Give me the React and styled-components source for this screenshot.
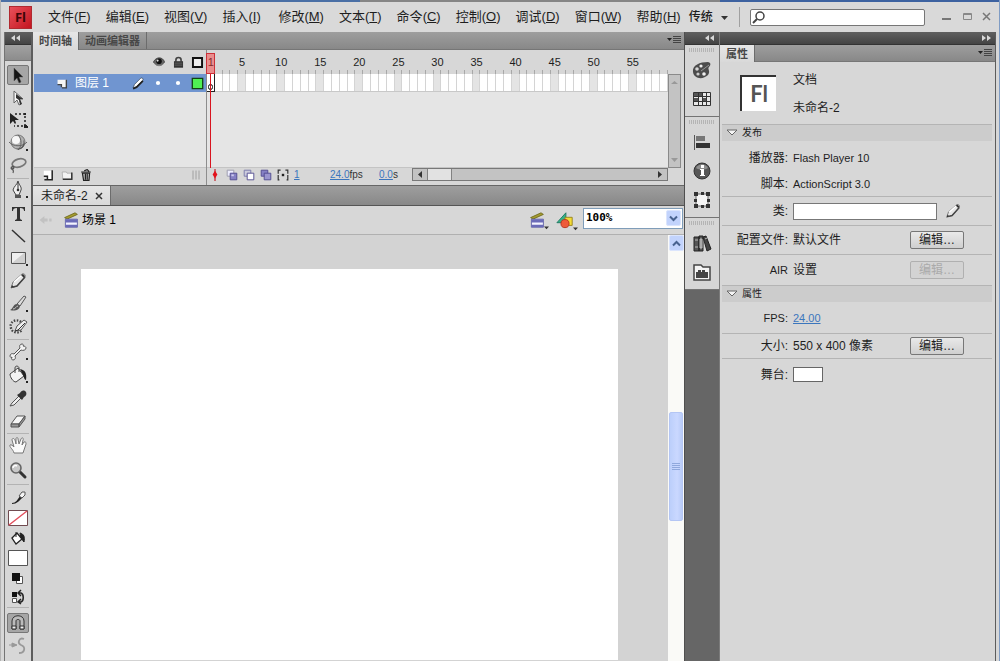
import React from 'react';
import styled, { createGlobalStyle } from 'styled-components';

const GlobalStyle = createGlobalStyle`
    *, *::before, *::after { box-sizing: border-box; }

    body {
        margin: 0;
        background: #d6d6d6;
        color: #1e1e1e;
        font: 12px/16px 'Liberation Sans', 'Noto Sans CJK SC', sans-serif;
        overflow: hidden;
    }

    button, input, select {
        font: inherit;
        color: inherit;
        margin: 0;
    }
`;

const Window = styled.div`
    display: flex;
    flex-direction: column;
    height: 100vh;
    background: #d7d7d7;
    border-left: 1px solid #b4b4b4;
    border-right: 1px solid #7f9cc4;
`;

const TopEdge = styled.div`
    height: 2px;
    flex: none;
    background: linear-gradient(90deg, #4a6fa5 0 36%, #858585 36% 72%, #3d62a0 72%);
`;

/* Menu bar */

const MenuBar = styled.header`
    display: flex;
    align-items: center;
    height: 30px;
    flex: none;
    padding: 0 6px 0 8px;
    background: #d9d9d9;
`;

const Logo = styled.div`
    flex: none;
    width: 23px;
    height: 23px;
    margin-right: 16px;
    border: 1px solid #b02a30;
    background: linear-gradient(135deg, #e8515a, #c4141f);
    color: #3c0508;
    font: bold 13px/20px 'Open Sans', sans-serif;
    text-align: center;
`;

const MenuList = styled.nav`
    display: flex;
    flex: none;
    gap: 15px;
`;

const MenuButton = styled.button`
    display: flex;
    align-items: center;
    min-width: 41px;
    padding: 0;
    border: 0;
    background: none;
    font-size: 13px;
    line-height: 20px;
    white-space: nowrap;
`;

const WorkspaceButton = styled(MenuButton)`
    flex: none;
    gap: 8px;
    margin-left: 8px;
    padding-right: 11px;
    border-right: 1px solid #a0a0a0;
    font-size: 12px;
    font-weight: 500;
`;

const Search = styled.label`
    display: flex;
    align-items: center;
    flex: 1;
    min-width: 0;
    height: 17px;
    margin: 0 16px 0 10px;
    border: 1px solid #767676;
    border-radius: 2px;
    background: #fff;

    input {
        flex: 1;
        min-width: 0;
        height: 14px;
        border: 0;
        outline: 0;
        background: none;
    }
`;

const WindowButtons = styled.div`
    display: flex;
    gap: 8px;

    button {
        display: flex;
        width: 12px;
        height: 14px;
        padding: 0;
        border: 0;
        background: none;
    }
`;

/* Frame of panels */

const Body = styled.div`
    display: grid;
    grid-template-columns: 29px 1fr 36px 276px;
    grid-template-rows: minmax(0, 1fr);
    flex: 1;
    min-height: 0;
    margin: 0 3px;
`;

const DarkBar = styled.div`
    display: flex;
    align-items: center;
    justify-content: ${({ $end }) => ($end ? 'flex-end' : 'flex-start')};
    height: 13px;
    flex: none;
    padding: 0 4px 0 6px;
    border-bottom: 1px solid #333;
    background: linear-gradient(#606060, #444);
`;

const TabStrip = styled.div`
    display: flex;
    align-items: stretch;
    flex: none;
    height: ${({ $height }) => $height}px;
    padding-right: 3px;
    background: linear-gradient(#9e9e9e, #888);
    border-bottom: 1px solid #767676;

    > svg {
        margin: auto 0 auto auto;
    }
`;

const Tab = styled.button`
    height: ${({ $height }) => $height}px;
    padding: 0 6px;
    border: 0;
    border-right: 1px solid #6c6c6c;
    background: ${({ $active }) => ($active ? 'linear-gradient(#e6e6e6, #d9d9d9)' : 'none')};
    color: #484848;
    font-size: ${({ $size }) => $size || 11}px;
    font-weight: 700;
    line-height: 16px;
    white-space: nowrap;
`;

/* Tool bar */

const Toolbar = styled.aside`
    display: flex;
    flex-direction: column;
    border-left: 1px solid #747474;
    border-right: 2px solid #5d5d5d;
    overflow: hidden;
`;

const ToolbarCap = styled.div`
    height: 16px;
    margin-bottom: 3px;
    flex: none;
    border-bottom: 1px solid #777;
    background: linear-gradient(#a2a2a2, #8c8c8c);
`;

const ToolGroup = styled.div`
    display: grid;
    grid-auto-rows: 1fr;
    justify-items: center;
    align-items: center;
    flex: none;
    height: ${({ $height }) => $height}px;
    margin: 0 2px;
    padding-top: ${({ $top }) => $top || 0}px;

    & + & {
        margin-top: 1px;
        border-top: 1px solid #b3b3b3;
    }
`;

const ToolButton = styled.button`
    position: relative;
    display: flex;
    align-items: center;
    justify-content: center;
    width: 22px;
    height: 20px;
    padding: 0;
    border: 1px solid ${({ $on }) => ($on ? '#777' : 'transparent')};
    border-radius: 2px;
    background: ${({ $on }) => ($on ? '#a6a6a6' : 'none')};

    &::after {
        content: '';
        display: ${({ $more }) => ($more ? 'block' : 'none')};
        position: absolute;
        right: 0;
        bottom: 1px;
        width: 2px;
        height: 2px;
        background: #222;
    }
`;

/* Timeline */

const Center = styled.main`
    display: flex;
    flex-direction: column;
    min-width: 0;
    min-height: 0;
`;

const Timeline = styled.section`
    display: grid;
    grid-template-columns: 173px 1fr;
    flex: none;
    padding: 0 3px 0 1px;
`;

const LayerPane = styled.div`
    border-right: 1px solid #8d8d8d;
`;

const LayerHead = styled.div`
    display: flex;
    align-items: center;
    justify-content: flex-end;
    gap: 6px;
    height: 24px;
    padding-right: 2px;
`;

const Layer = styled.div`
    display: flex;
    align-items: center;
    height: 18px;
    padding: 0 2px 0 23px;
    background: #7095d0;
    color: #fff;

    span {
        flex: 1;
        margin-left: 7px;
    }

    svg + svg { margin-left: 6px; }
`;

const PaneFill = styled.div`
    height: 76px;
    background: #e5e5e5;
    border-bottom: 1px solid #c4c4c4;
`;

const PaneFooter = styled.div`
    display: flex;
    align-items: center;
    gap: ${({ $gap }) => $gap}px;
    height: 17px;
    padding: 0 ${({ $right }) => $right}px 4px ${({ $left }) => $left}px;
    color: #333;
    font-size: 10px;
    line-height: 12px;
    white-space: nowrap;

    > svg:last-child { margin-left: auto; }
`;

const FooterValue = styled.span`
    width: ${({ $width }) => $width}px;
`;

const FramePane = styled.div`
    position: relative;
    min-width: 0;
`;

const Ruler = styled.div`
    display: flex;
    height: 24px;
    padding: 4px 13px 0 0;
    font-size: 11px;
    line-height: 16px;

    span {
        display: flex;
        flex: 1 1 0;
        width: 0;
        justify-content: center;
        background: linear-gradient(#a8a8a8, #a8a8a8) right bottom / 1px 4px no-repeat;
    }
`;

const FrameBody = styled.div`
    display: grid;
    grid-template-columns: 1fr 13px;
`;

const Frames = styled.div`
    display: flex;
    height: 18px;
    border-bottom: 1px solid #c8c8c8;
    background: #fff;
`;

const Frame = styled.i`
    flex: 1 1 0;
    border-right: 1px solid #d4d4d4;
    background: ${({ $fifth }) => ($fifth ? '#e4e4e4' : '#fff')};
`;

const Playhead = styled.div`
    position: absolute;
    top: 3px;
    left: 0;
    display: flex;
    flex-direction: column;
    align-items: center;
    width: 7px;
    height: 115px;
    pointer-events: none;
`;

const PlayheadHandle = styled.div`
    flex: none;
    width: 9px;
    height: 21px;
    border: 1px solid #cc3038;
    background: rgba(255, 50, 50, 0.45);
`;

const PlayheadLine = styled.div`
    flex: 1;
    width: 1px;
    background: #d8141f;
`;

const KeyFrame = styled.div`
    position: absolute;
    top: 24px;
    left: 0;
    width: 8px;
    height: 18px;
    border: solid #222;
    border-width: 0 1px 1px 0;

    &::after {
        content: '';
        position: absolute;
        left: 1px;
        bottom: 1px;
        width: 5px;
        height: 6px;
        border: 1px solid #111;
        border-radius: 3px;
    }
`;

const FrameScroll = styled.div`
    display: flex;
    flex-direction: column;
    justify-content: space-between;
    align-items: center;
    padding: 4px 0;
    border: 1px solid #8a8a8a;
    background: #c3c3c3;
`;

const HScroll = styled.div`
    display: flex;
    flex: 1;
    align-items: center;
    justify-content: space-between;
    height: 13px;
    margin-left: 10px;
    padding-right: 4px;
    border: 1px solid #787878;
    background: #c3c3c3;

    i {
        width: 25px;
        height: 11px;
        margin: 0 auto 0 0;
        border: solid #828282;
        border-width: 0 1px;
        background: #e2e2e2;
    }

    svg:first-child { margin: 0 3px 0 4px; }
`;

const HotText = styled.a`
    color: #3b76bd;
    text-decoration: underline;
`;

/* Document */

const DocumentTabs = styled(TabStrip)`
    border-top: 1px solid #666;
    border-bottom-color: #555;
`;

const DocumentTab = styled(Tab)`
    display: flex;
    align-items: center;
    gap: 7px;
    padding: 0 7px 0 8px;
    font-weight: 400;
    color: #222;
`;

const EditBar = styled.div`
    display: flex;
    align-items: center;
    flex: none;
    height: 29px;
    padding: 0 1px 0 5px;
    border-bottom: 1px solid #b0b0b0;
`;

const EditIcon = styled.span`
    display: flex;
    margin-left: 9px;
`;

const EditButton = styled.button`
    display: flex;
    align-items: flex-end;
    width: 27px;
    padding: 0;
    border: 0;
    background: none;

    svg + svg {
        margin: 0 0 -2px -1px;
    }
`;

const SceneName = styled.span`
    flex: 1;
    margin-left: 3px;
    color: #000;
`;

const Zoom = styled.label`
    position: relative;
    align-self: flex-start;
    width: 100px;
    margin-top: 2px;

    select {
        display: block;
        width: 100%;
        height: 21px;
        padding: 0 2px 2px;
        border: 1px solid #7f9db9;
        border-radius: 0;
        outline: 0;
        background: #fff;
        color: #000;
        font: bold 11px/16px 'DejaVu Sans Mono', monospace;
        appearance: none;
    }
`;

const ScrollButton = styled.span`
    display: flex;
    align-items: center;
    justify-content: center;
    width: 15px;
    height: 16px;
    border: 1px solid #dbe5fd;
    border-radius: 2px;
    background: #c2d3fc;
`;

const ZoomArrow = styled(ScrollButton)`
    position: absolute;
    top: 2px;
    right: 2px;
    pointer-events: none;
`;

const Work = styled.div`
    display: flex;
    flex: 1;
    min-height: 0;
    background: #d3d3d3;
`;

const Stage = styled.div`
    flex: 1;
    margin: 34px 50px 1px 48px;
    background: #fff;
`;

const VScroll = styled.div`
    display: grid;
    grid-template-rows: 17px 160fr 109fr 140fr;
    justify-items: center;
    width: 16px;
    background: #fafaf7;
`;

const VThumb = styled.div`
    display: flex;
    align-items: center;
    justify-content: center;
    grid-row: 3;
    width: 14px;
    border: 1px solid #b4c6f4;
    border-radius: 2px;
    background: linear-gradient(90deg, #bccffb, #cad8ff 60%, #b9cbf8);
`;

/* Icon dock */

const Dock = styled.aside`
    display: flex;
    flex-direction: column;
    border-left: 1px solid #4f4f4f;
    border-right: 1px solid #7b7b7b;
    background: #666;
`;

const DockGroup = styled.div`
    display: flex;
    flex-direction: column;
    align-items: center;
    gap: 7px;
    padding: 3px 0 6px;
    border-bottom: 1px solid #747474;
    background: #d6d6d6;

    &::before {
        content: '';
        width: 26px;
        height: 4px;
        background: repeating-linear-gradient(90deg, #b4b4b4 0 1px, transparent 1px 2px);
    }
`;

const DockButton = styled.button`
    display: flex;
    align-items: center;
    justify-content: center;
    width: 22px;
    height: 22px;
    padding: 0;
    border: 0;
    background: none;
`;

/* Properties panel */

const Properties = styled.aside`
    display: flex;
    flex-direction: column;
    min-width: 0;
    border-right: 1px solid #5c5c5c;
`;

const DocInfo = styled.div`
    display: grid;
    grid-template-columns: 36px 1fr;
    column-gap: 17px;
    height: 62px;
    padding: 13px 20px 0;
`;

const DocBadge = styled.div`
    width: 36px;
    height: 36px;
    border: solid #333;
    border-width: 2px 0 0 2px;
    background: #fff;
    color: #555;
    font: bold 22px/34px Lato, sans-serif;
    text-align: center;
`;

const DocTitle = styled.div`
    display: grid;
    row-gap: 12px;
    align-content: start;
    margin-top: -3px;
`;

const SectionHead = styled.button`
    display: flex;
    align-items: center;
    gap: 4px;
    height: 17px;
    margin: 0 3px 0 2px;
    padding: 0 4px;
    border: 0;
    border-top: 1px solid #b4b4b4;
    background: #ccc;
    font-size: 10px;
    line-height: 14px;
`;

const PublishRows = styled.div`
    padding-top: 4px;
`;

const Row = styled.div`
    display: flex;
    align-items: center;
    height: ${({ $height }) => $height}px;
    margin: 0 3px 0 2px;
    padding-right: 28px;
    border-bottom: ${({ $line }) => ($line ? 1 : 0)}px solid #b4b4b4;
    font-size: ${({ $latin }) => ($latin ? 11 : 12)}px;
    white-space: nowrap;
`;

const RowLabel = styled.label`
    width: 66px;
    margin-right: 5px;
    text-align: right;
    font-size: ${({ $latin }) => ($latin ? 11 : 12)}px;
`;

const Value = styled.span`
    flex: 1;
`;

const ClassInput = styled.input`
    flex: 1;
    min-width: 0;
    height: 17px;
    margin-right: 7px;
    border: 1px solid #777;
    outline: 0;
    background: #fff;
`;

const PickButton = styled.button`
    display: flex;
    padding: 0 2px 0 0;
    border: 0;
    background: none;
`;

const PushButton = styled.button`
    width: 54px;
    height: 18px;
    padding: 0;
    border: 1px solid #777;
    border-radius: 2px;
    background: linear-gradient(#e9e9e9, #cfcfcf);
    line-height: 14px;

    &:disabled {
        border-color: #b0b0b0;
        background: #d3d3d3;
        color: #aaa;
    }
`;

const ColorSwatch = styled.button`
    width: 30px;
    height: 15px;
    padding: 0;
    border: 1px solid #666;
    background: #fff;
`;

const shapes = {
    arrow: <path d="M6 3v13l3-3 2 5 2-1-2-5h4z" fill="#161616" stroke="#555" strokeWidth=".5" />,
    subselect: (
        <>
            <path d="M6 3v12l3-3 2 5 2-1-2-5h4z" fill="#fafafa" stroke="#666" />
            <path d="M8 6v4l3 2 1 5 2-1-2-5h3z" fill="#333" />
        </>
    ),
    transform: (
        <>
            <path d="M7 4h10v12H6" fill="none" stroke="#222" strokeWidth="1.5" strokeDasharray="2 2" />
            <path d="M2 3v11l3-3 2 3 1-1-1-3h4z" fill="#222" />
            <path d="M16 15h3v3h-3zM16 3h2v2h-2z" fill="#222" />
        </>
    ),
    sphere: (
        <>
            <circle cx="10" cy="9" r="7" fill="#b2b2b2" stroke="#777" />
            <circle cx="8" cy="7" r="4" fill="#f7f7f7" />
            <path d="M1 9c4 5 14 5 18 0M10 2c4 3 4 12 0 15" fill="none" stroke="#666" />
            <path d="M15 6c2 5-1 10-7 10 6 2 11-4 7-10z" fill="#555" />
        </>
    ),
    lasso: (
        <>
            <ellipse cx="11" cy="7" rx="7" ry="4" transform="rotate(-15 11 7)" fill="none" stroke="#777" strokeWidth="1.7" />
            <path d="M5 10c-3 1-2 4 0 3s0-4-1-2c-1 2 3 3 1 6" fill="none" stroke="#555" strokeWidth="1.3" />
        </>
    ),
    pen: (
        <>
            <path d="M10 1c1 4 4 6 3 9l-2 5H8L5 10c1-4 4-5 5-9z" fill="#f1f1f1" stroke="#444" />
            <path d="M10 2v8" stroke="#333" />
            <circle cx="10" cy="10" r="1.3" fill="#333" />
            <path d="M7 15h6v3H7z" fill="#555" />
        </>
    ),
    type: <path d="M4 4h13v4h-1c0-2-1-3-4-3v10c0 1 1 2 2 2v1H7v-1c1 0 2-1 2-2V5C6 5 5 6 5 8H4z" fill="#333" />,
    line: <path d="M4 4l13 12" stroke="#333" strokeWidth="1.5" />,
    rect: (
        <>
            <path d="M3.5 4.5h14v11h-14z" fill="#d0d0d0" stroke="#555" />
            <path d="M4 5h12L4 15z" fill="#f0f0f0" />
        </>
    ),
    pencil: (
        <>
            <path d="M3 17l2-6L14 3c2-1 4 1 3 3l-8 9z" fill="#e6e6e6" stroke="#777" />
            <path d="M6 11l8-7" stroke="#fff" strokeWidth="1.5" />
            <path d="M3 17l1-3 2 2zM13 4l3 3 1-2-2-2z" fill="#333" />
            <path d="M5 16l4-1 8-9" stroke="#444" strokeWidth="1.6" fill="none" />
        </>
    ),
    brush: (
        <>
            <path d="M9 10L16 2l2 1-6 9z" fill="#ddd" stroke="#555" />
            <path d="M2 16c3-1 3-6 7-6l3 2c-1 5-6 5-10 4z" fill="#555" />
            <path d="M5 15c3 0 3-3 5-3" stroke="#ccc" fill="none" />
        </>
    ),
    deco: (
        <>
            <path d="M13 5C8 1 1 5 3 11c1 5 8 6 11 2" fill="none" stroke="#444" strokeWidth="2.4" strokeDasharray="1.5 1.5" />
            <path d="M7 14l2-5 7-6 3 2-6 8z" fill="#eee" stroke="#555" />
            <path d="M7 14l3-1 7-7" stroke="#333" fill="none" />
        </>
    ),
    bone: (
        <path
            d="M2 14c0-2 2-3 4-2l6-6c-1-2 0-4 2-4 1 0 2 1 1 2 2 0 3 1 3 2 0 2-3 3-5 2l-6 6c1 2 0 4-2 4-1 0-2-1-1-3-1 1-2 0-2-1z"
            fill="#f2f2f2"
            stroke="#555"
        />
    ),
    bucket: (
        <>
            <path d="M2 9l8-6 6 8-8 6c-3 0-6-5-6-8z" fill="#f4f4f4" stroke="#444" />
            <path d="M7 8V3c0-3 4-2 4 0v4" fill="none" stroke="#444" />
            <path d="M12 4c5 1 7 4 6 11-2 0-2-4-3-5z" fill="#222" />
        </>
    ),
    dropper: (
        <>
            <path d="M2 18l2-3 7-7 2 2-7 7z" fill="#eee" stroke="#555" />
            <path d="M9 7l5 5 2-3c3-1 3-5 1-6s-4 0-5 2z" fill="#333" />
        </>
    ),
    eraser: (
        <>
            <path d="M3 13l6-8h8l-6 8z" fill="#f6f6f6" stroke="#555" />
            <path d="M3 13h8v3H3zM11 13l6-8v3l-6 8z" fill="#999" stroke="#555" />
        </>
    ),
    hand: (
        <path
            d="M6 17c-1-4-5-6-4-8 1-1 3 1 4 2L4 4c0-2 2-2 3 0l1 4V3c0-2 2-2 2 0l1 5 2-5c1-2 3-1 2 1l-1 5 2-3c2-1 2 1 2 2l-3 9z"
            fill="#fafafa"
            stroke="#777"
        />
    ),
    magnifier: (
        <>
            <path d="M11 10l6 6" stroke="#333" strokeWidth="3" strokeLinecap="round" />
            <circle cx="8" cy="7" r="5" fill="#c8c8c8" stroke="#666" strokeWidth="1.6" />
            <path d="M5 7c0-2 2-3 4-2" stroke="#fff" fill="none" strokeWidth="1.5" />
        </>
    ),
    strokePen: (
        <>
            <path d="M4 15c4 0 5-3 9-8l2 2c-4 4-6 7-11 7z" fill="#222" />
            <path d="M11 8l3-4h3v3l-3 3z" fill="#f5f5f5" stroke="#555" />
        </>
    ),
    noColor: (
        <>
            <path d="M.5 2.5h19v15H.5z" fill="#fff" stroke="#704b50" />
            <path d="M1 17L19 3" stroke="#e24e5c" strokeWidth="1.4" />
        </>
    ),
    white: <path d="M.5 2.5h19v15H.5z" fill="#fff" stroke="#555" />,
    smallBucket: (
        <>
            <path d="M4 10l5-5 5 6-6 5z" fill="#fff" stroke="#222" strokeWidth="1.3" />
            <path d="M8 9V4M12 5c4 1 5 4 4 9l-3-4z" fill="#222" stroke="#222" />
        </>
    ),
    blackWhite: (
        <>
            <path d="M8.5 8.5h6v7h-6z" fill="#fff" stroke="#555" />
            <path d="M4 5h8v8H4z" fill="#111" />
        </>
    ),
    swap: (
        <>
            <path d="M4 4h5v5H4z" fill="#111" />
            <path d="M4.5 10.5h4v4h-4z" fill="#fff" stroke="#555" />
            <path d="M11 5h2c3 1 3 8 0 9h-2M13 2l-3 3 3 3M13 11l-3 3 3 2" fill="none" stroke="#222" strokeWidth="1.5" />
        </>
    ),
    magnet: (
        <>
            <path d="M4 16V8c0-7 12-7 12 0v8h-4V8c0-2-4-2-4 0v8z" fill="#bbb" stroke="#333" />
            <path d="M4 13h4v3H4zM12 13h4v3h-4z" fill="#eee" stroke="#333" />
        </>
    ),
    smooth: (
        <>
            <path d="M16 3c-5-2-7 4-3 6 5 2 4 8-2 8" fill="none" stroke="#999" strokeWidth="1.8" />
            <path d="M1 9h7M4 7v4l5-2z" fill="#999" stroke="#999" />
        </>
    ),
    eye: (
        <>
            <path d="M2 10c4-8 13-8 16 0-4 7-12 7-16 0z" fill="#666" stroke="#333" />
            <circle cx="10" cy="9" r="4" fill="#111" />
            <path d="M3 12c4 4 10 4 14 0" stroke="#999" fill="none" />
            <circle cx="8" cy="8" r="1.5" fill="#ddd" />
        </>
    ),
    lock: (
        <>
            <path d="M6 9V6c0-5 8-5 8 0v3" fill="none" stroke="#444" strokeWidth="2.5" />
            <path d="M3 8h14v10H3z" fill="#333" />
            <path d="M4 11h12M4 14h12" stroke="#777" />
        </>
    ),
    outline: <path d="M3 3h14v14H3z" fill="#eee" stroke="#111" strokeWidth="3" />,
    layerColor: <path d="M2 2h16v16H2z" fill="#4ff053" stroke="#124212" strokeWidth="2" />,
    layerPage: (
        <>
            <path d="M1 3h16v14h-8v-6H1z" fill="#f5f5f5" />
            <path d="M17 3v15H9M1 12h7v5" fill="none" stroke="#444" strokeWidth="2.5" />
        </>
    ),
    layerPencil: (
        <>
            <path d="M3 17l2-5L14 3c2-1 4 1 3 3l-9 9z" fill="#fff" stroke="#345" />
            <path d="M3 18l5-2 9-9" stroke="#222" strokeWidth="2.5" fill="none" />
        </>
    ),
    dot: <circle cx="10" cy="10" r="3" fill="#fff" />,
    newLayer: (
        <>
            <path d="M3 3h15v14H8v-5H3z" fill="#fff" />
            <path d="M17 2v16H4M3 12h6v5" fill="none" stroke="#222" strokeWidth="2.5" />
        </>
    ),
    folder: (
        <>
            <path d="M2 5h7l1 2h8v10H3z" fill="#f3f3f3" stroke="#999" />
            <path d="M3 17h15V6" fill="none" stroke="#333" strokeWidth="2.5" />
        </>
    ),
    trash: (
        <>
            <path d="M4 7h12l-1 12H6z" fill="#bbb" stroke="#222" strokeWidth="2" />
            <path d="M2 5h16M7 3l5-2 3 3M9 8v10M12 8v10" stroke="#222" strokeWidth="2" fill="none" />
        </>
    ),
    resizer: <path d="M2 1v18M8 1v18M14 1v18" stroke="#a0a0a0" strokeWidth="2" />,
    centerFrame: (
        <>
            <path d="M10 0v20" stroke="#c01018" strokeWidth="1.8" />
            <path d="M10 3l4 6-4 7-4-7z" fill="#e3131d" />
        </>
    ),
    onion: (
        <>
            <path d="M2 2h11v10H2z" fill="#eef" stroke="#99a" strokeWidth="1.5" />
            <path d="M7 7h11v11H7z" fill="#8580c4" stroke="#4f4a8e" strokeWidth="1.5" />
            <path d="M9 9h4v3H9z" fill="#ccc9ee" />
        </>
    ),
    onionOutline: (
        <>
            <path d="M2 2h11v10H2z" fill="#ccd" stroke="#77a" strokeWidth="1.5" />
            <path d="M7 7h11v11H7z" fill="#fff" stroke="#4f4a8e" strokeWidth="1.5" />
        </>
    ),
    onionMulti: (
        <>
            <path d="M2 2h11v10H2z" fill="#8580c4" stroke="#4f4a8e" strokeWidth="1.5" />
            <path d="M7 7h11v11H7z" fill="#9a95cf" stroke="#4f4a8e" strokeWidth="1.5" />
        </>
    ),
    markers: (
        <>
            <path d="M6 2H2v16h4M14 2h4v16h-4" fill="none" stroke="#333" strokeWidth="2" strokeDasharray="10 2" />
            <path d="M8 8h4v4H8z" fill="#222" />
        </>
    ),
    back: <path d="M2 10l6-5v3h4v4H8v3zM14 8h3v4h-3z" fill="#c2c2c2" />,
    scene: (
        <>
            <path d="M2 7L15 1l3 2L5 9z" fill="#a49b30" stroke="#6a6418" />
            <path d="M3 9h15v10H3z" fill="#f3f3ff" stroke="#4e4f9a" />
            <path d="M3 9h15v4H3zM3 16h15v3H3z" fill="#6b6bb8" />
        </>
    ),
    symbols: (
        <>
            <path d="M1 13L11 2v11z" fill="#35b189" stroke="#1e7760" />
            <path d="M10 7h8v9h-8z" fill="#f4dc36" stroke="#93801c" />
            <circle cx="10" cy="14" r="4.5" fill="#ee5b3a" stroke="#b5311c" />
        </>
    ),
    palette: (
        <>
            <path d="M1 12C0 5 8 2 16 2c4 1 2 4 1 5-2 2 2 4-1 8-5 5-14 4-15-3z" fill="#4c4c4c" />
            <circle cx="5" cy="9" r="1.8" fill="#d6d6d6" />
            <circle cx="9" cy="6" r="1.6" fill="#eee" />
            <circle cx="6" cy="14" r="1.6" fill="#ccc" />
            <circle cx="12" cy="14" r="1.8" fill="#eee" />
            <path d="M9 11l8-6" stroke="#999" />
        </>
    ),
    swatches: (
        <>
            <path d="M1.5 3.5h17v13h-17z" fill="#e8e8e8" stroke="#333" />
            <path d="M2 4h8v4H2zM2 9h4v4H2zM10 9h4v4h-4z" fill="#555" />
            <path d="M2 7.5h16M2 12.5h16M6.5 4v13M10.5 4v13M14.5 4v13" stroke="#333" />
        </>
    ),
    align: (
        <>
            <path d="M2.5 3v15" stroke="#555" />
            <path d="M4 4h9v5H4z" fill="#777" />
            <path d="M4 11h14v5H4z" fill="#333" />
        </>
    ),
    info: (
        <>
            <circle cx="10" cy="10" r="8" fill="#565656" stroke="#333" />
            <path d="M4 7c3-5 9-5 12 0-3 2-9 2-12 0z" fill="#8e8e8e" />
            <path d="M9 4h3v3H9zM8 8h4v6h1v1H8v-1h1V9H8z" fill="#fff" />
        </>
    ),
    bounds: (
        <>
            <path d="M4 4h12v12H4z" fill="#f5f5f5" stroke="#666" />
            <path d="M2 2h4v4H2zM14 2h4v4h-4zM2 14h4v4H2zM14 14h4v4h-4zM9 2h3v3H9zM9 15h3v3H9zM2 9h3v3H2zM15 9h3v3h-3z" fill="#333" />
        </>
    ),
    books: (
        <>
            <path d="M2 4h5v14H2zM7 3h4v15H7z" fill="#555" stroke="#222" />
            <path d="M11 4l3-1 5 13-4 2z" fill="#444" stroke="#222" />
            <path d="M3 7h3M3 14h3M8 6h2v9H8zM13 6l2-1" stroke="#bbb" fill="#999" />
        </>
    ),
    components: (
        <>
            <path d="M2 3h7l2 2h7v13H2z" fill="#f4f4f4" stroke="#444" strokeWidth="1.5" />
            <path d="M4 10h2V8h3v2h1V8h3v2h3v6H4z" fill="#444" />
        </>
    ),
};

const Icon = ({ name, size = 20 }) => (
    <svg width={size} height={size} viewBox="0 0 20 20" aria-hidden="true">
        {shapes[name]}
    </svg>
);

const Collapse = ({ flip }) => (
    <svg width="10" height="7" viewBox="0 0 10 7" aria-hidden="true">
        <path d={flip ? 'M1 0l4 3-4 3zM6 0l4 3-4 3z' : 'M4 0L0 3l4 3zM9 0L5 3l4 3z'} fill="#d8d8d8" />
    </svg>
);

const PanelMenu = () => (
    <svg width="14" height="9" viewBox="0 0 14 9" aria-hidden="true">
        <path d="M0 2h5L2.5 5z" fill="#222" />
        <path d="M6 .5h8M6 2.5h8M6 4.5h8M6 6.5h8" stroke="#444" />
    </svg>
);

const Triangle = ({ dir, color = '#333', size = 7 }) => {
    const points = { left: '5,0 5,7 1,3.5', right: '2,0 2,7 6,3.5', up: '0,5 7,5 3.5,2', down: '0,2 7,2 3.5,6' };
    return (
        <svg width={size} height={size} viewBox="0 0 7 7" aria-hidden="true">
            <polygon points={points[dir]} fill={color} />
        </svg>
    );
};

const Chevron = ({ up }) => (
    <svg width="9" height="7" viewBox="0 0 9 7" aria-hidden="true">
        <path d={up ? 'M1 5.5l3.5-3.5L8 5.5' : 'M1 1.5L4.5 5 8 1.5'} fill="none" stroke="#48628f" strokeWidth="2" />
    </svg>
);

const Disclosure = () => (
    <svg width="12" height="8" viewBox="0 0 12 8" aria-hidden="true">
        <path d="M1 1h10L6 6z" fill="#f5f5f5" stroke="#666" />
    </svg>
);

const menus = [
    ['文件', 'F'],
    ['编辑', 'E'],
    ['视图', 'V'],
    ['插入', 'I'],
    ['修改', 'M'],
    ['文本', 'T'],
    ['命令', 'C'],
    ['控制', 'O'],
    ['调试', 'D'],
    ['窗口', 'W'],
    ['帮助', 'H'],
];

const toolGroups = [
    {
        height: 113,
        tools: [{ icon: 'arrow', on: true }, { icon: 'subselect' }, { icon: 'transform', more: true }, { icon: 'sphere', more: true }, { icon: 'lasso' }],
    },
    {
        height: 160,
        tools: [
            { icon: 'pen', more: true },
            { icon: 'type' },
            { icon: 'line' },
            { icon: 'rect', more: true },
            { icon: 'pencil' },
            { icon: 'brush', more: true },
            { icon: 'deco' },
        ],
    },
    {
        height: 93,
        tools: [{ icon: 'bone', more: true }, { icon: 'bucket', more: true }, { icon: 'dropper' }, { icon: 'eraser' }],
    },
    { height: 50, tools: [{ icon: 'hand' }, { icon: 'magnifier' }] },
    {
        height: 122,
        top: 3,
        tools: [
            { icon: 'strokePen' },
            { icon: 'noColor' },
            { icon: 'smallBucket' },
            { icon: 'white' },
            { icon: 'blackWhite' },
            { icon: 'swap' },
        ],
    },
    { height: 50, top: 4, tools: [{ icon: 'magnet', on: true }, { icon: 'smooth' }] },
];

const dockGroups = [
    ['palette', 'swatches'],
    ['align', 'info', 'bounds'],
    ['books', 'components'],
];

const frames = Array.from({ length: 59 }, (_, i) => i + 1);

const Tools = () => (
    <Toolbar>
        <DarkBar>
            <Collapse />
        </DarkBar>
        <ToolbarCap />
        {toolGroups.map((group) => (
            <ToolGroup key={group.tools[0].icon} $height={group.height} $top={group.top}>
                {group.tools.map(({ icon, on, more }) => (
                    <ToolButton key={icon} $on={on} $more={more} aria-label={icon}>
                        <Icon name={icon} />
                    </ToolButton>
                ))}
            </ToolGroup>
        ))}
    </Toolbar>
);

const TimelinePanel = () => (
    <>
        <TabStrip $height={18}>
            <Tab $active $height={18}>时间轴</Tab>
            <Tab $height={17}>动画编辑器</Tab>
            <PanelMenu />
        </TabStrip>
        <Timeline>
            <LayerPane>
                <LayerHead>
                    <Icon name="eye" size={14} />
                    <Icon name="lock" size={13} />
                    <Icon name="outline" size={13} />
                </LayerHead>
                <Layer>
                    <Icon name="layerPage" size={11} />
                    <span>图层 1</span>
                    <Icon name="layerPencil" size={14} />
                    <Icon name="dot" size={14} />
                    <Icon name="dot" size={14} />
                    <Icon name="layerColor" size={13} />
                </Layer>
                <PaneFill />
                <PaneFooter $gap={7} $left={8} $right={4}>
                    <Icon name="newLayer" size={12} />
                    <Icon name="folder" size={12} />
                    <Icon name="trash" size={12} />
                    <Icon name="resizer" size={10} />
                </PaneFooter>
            </LayerPane>
            <FramePane>
                <Ruler>
                    {frames.map((n) => (
                        <span key={n}>{n === 1 || n % 5 === 0 ? n : ''}</span>
                    ))}
                </Ruler>
                <FrameBody>
                    <div>
                        <Frames>
                            {frames.map((n) => (
                                <Frame key={n} $fifth={n % 5 === 0} />
                            ))}
                        </Frames>
                        <PaneFill />
                    </div>
                    <FrameScroll>
                        <Triangle dir="up" color="#999" />
                        <Triangle dir="down" color="#999" />
                    </FrameScroll>
                </FrameBody>
                <PaneFooter $gap={5} $left={2} $right={13}>
                    <Icon name="centerFrame" size={12} />
                    <Icon name="onion" size={12} />
                    <Icon name="onionOutline" size={12} />
                    <Icon name="onionMulti" size={12} />
                    <Icon name="markers" size={12} />
                    <FooterValue $width={31}><HotText href="#frame">1</HotText></FooterValue>
                    <FooterValue $width={44}><HotText href="#fps">24.0</HotText>fps</FooterValue>
                    <FooterValue $width={18}><HotText href="#time">0.0</HotText>s</FooterValue>
                    <HScroll>
                        <Triangle dir="left" />
                        <i />
                        <Triangle dir="right" />
                    </HScroll>
                </PaneFooter>
                <KeyFrame />
                <Playhead>
                    <PlayheadHandle />
                    <PlayheadLine />
                </Playhead>
            </FramePane>
        </Timeline>
    </>
);

const DocumentView = () => (
    <>
        <DocumentTabs $height={21}>
            <DocumentTab $active $height={19} $size={12}>
                未命名-2
                <svg width="8" height="8" viewBox="0 0 8 8" aria-hidden="true">
                    <path d="M1 1l6 6M7 1L1 7" stroke="#333" strokeWidth="1.5" />
                </svg>
            </DocumentTab>
        </DocumentTabs>
        <EditBar>
            <Icon name="back" size={16} />
            <EditIcon>
                <Icon name="scene" size={16} />
            </EditIcon>
            <SceneName>场景 1</SceneName>
            <EditButton aria-label="编辑场景">
                <Icon name="scene" size={16} />
                <Triangle dir="down" size={5} />
            </EditButton>
            <EditButton aria-label="编辑元件">
                <Icon name="symbols" size={18} />
                <Triangle dir="down" size={5} />
            </EditButton>
            <Zoom aria-label="缩放">
                <select defaultValue="100%">
                    <option>100%</option>
                    <option>200%</option>
                </select>
                <ZoomArrow><Chevron /></ZoomArrow>
            </Zoom>
        </EditBar>
        <Work>
            <Stage />
            <VScroll>
                <ScrollButton><Chevron up /></ScrollButton>
                <VThumb>
                    <svg width="8" height="8" viewBox="0 0 8 8" aria-hidden="true">
                        <path d="M0 .5h8M0 2.5h8M0 4.5h8M0 6.5h8" stroke="#8fa8dd" />
                    </svg>
                </VThumb>
            </VScroll>
        </Work>
    </>
);

const PropertiesPanel = () => (
    <Properties>
        <DarkBar $end>
            <Collapse flip />
        </DarkBar>
        <TabStrip $height={17}>
            <Tab $active $height={17}>属性</Tab>
            <PanelMenu />
        </TabStrip>
        <DocInfo>
            <DocBadge>Fl</DocBadge>
            <DocTitle>
                <span>文档</span>
                <span>未命名-2</span>
            </DocTitle>
        </DocInfo>
        <SectionHead>
            <Disclosure />
            发布
        </SectionHead>
        <PublishRows>
            <Row $height={26} $latin>
                <RowLabel as="span">播放器:</RowLabel>
                <Value>Flash Player 10</Value>
            </Row>
            <Row $height={26} $latin $line>
                <RowLabel as="span">脚本:</RowLabel>
                <Value>ActionScript 3.0</Value>
            </Row>
        </PublishRows>
        <Row $height={29} $line>
            <RowLabel htmlFor="class-name">类:</RowLabel>
            <ClassInput id="class-name" />
            <PickButton aria-label="编辑类定义"><Icon name="pencil" size={18} /></PickButton>
        </Row>
        <Row $height={29} $line>
            <RowLabel as="span">配置文件:</RowLabel>
            <Value>默认文件</Value>
            <PushButton>编辑…</PushButton>
        </Row>
        <Row $height={30}>
            <RowLabel as="span" $latin>AIR</RowLabel>
            <Value>设置</Value>
            <PushButton disabled>编辑…</PushButton>
        </Row>
        <SectionHead>
            <Disclosure />
            属性
        </SectionHead>
        <Row $height={32} $latin $line>
            <RowLabel as="span" $latin>FPS:</RowLabel>
            <HotText href="#fps">24.00</HotText>
        </Row>
        <Row $height={25} $line>
            <RowLabel as="span">大小:</RowLabel>
            <Value>550 x 400 像素</Value>
            <PushButton>编辑…</PushButton>
        </Row>
        <Row $height={31}>
            <RowLabel htmlFor="stage-color">舞台:</RowLabel>
            <ColorSwatch id="stage-color" />
        </Row>
    </Properties>
);

const App = () => (
    <Window>
        <GlobalStyle />
        <TopEdge />
        <MenuBar>
            <Logo>Fl</Logo>
            <MenuList>
                {menus.map(([label, key]) => (
                    <MenuButton key={key}>
                        {label}(<u>{key}</u>)
                    </MenuButton>
                ))}
            </MenuList>
            <WorkspaceButton>
                传统
                <Triangle dir="down" />
            </WorkspaceButton>
            <Search aria-label="搜索">
                <svg width="18" height="15" viewBox="0 0 18 15" aria-hidden="true">
                    <circle cx="9" cy="6" r="4" fill="none" stroke="#444" strokeWidth="1.5" />
                    <path d="M6 9l-4 4" stroke="#444" strokeWidth="2" />
                </svg>
                <input type="text" />
            </Search>
            <WindowButtons>
                <button aria-label="最小化">
                    <svg width="12" height="14" viewBox="0 0 12 14"><path d="M1 9h9" stroke="#777" strokeWidth="2" /></svg>
                </button>
                <button aria-label="最大化">
                    <svg width="12" height="14" viewBox="0 0 12 14"><path d="M2.5 3.5h8v6h-8zM2 4.5h9" fill="none" stroke="#888" /></svg>
                </button>
                <button aria-label="关闭">
                    <svg width="12" height="14" viewBox="0 0 12 14"><path d="M2 3l7 7M9 3l-7 7" stroke="#777" strokeWidth="1.5" /></svg>
                </button>
            </WindowButtons>
        </MenuBar>
        <Body>
            <Tools />
            <Center>
                <TimelinePanel />
                <DocumentView />
            </Center>
            <Dock>
                <DarkBar $end>
                    <Collapse />
                </DarkBar>
                {dockGroups.map((group) => (
                    <DockGroup key={group[0]}>
                        {group.map((name) => (
                            <DockButton key={name} aria-label={name}>
                                <Icon name={name} />
                            </DockButton>
                        ))}
                    </DockGroup>
                ))}
            </Dock>
            <PropertiesPanel />
        </Body>
    </Window>
);

export default App;
